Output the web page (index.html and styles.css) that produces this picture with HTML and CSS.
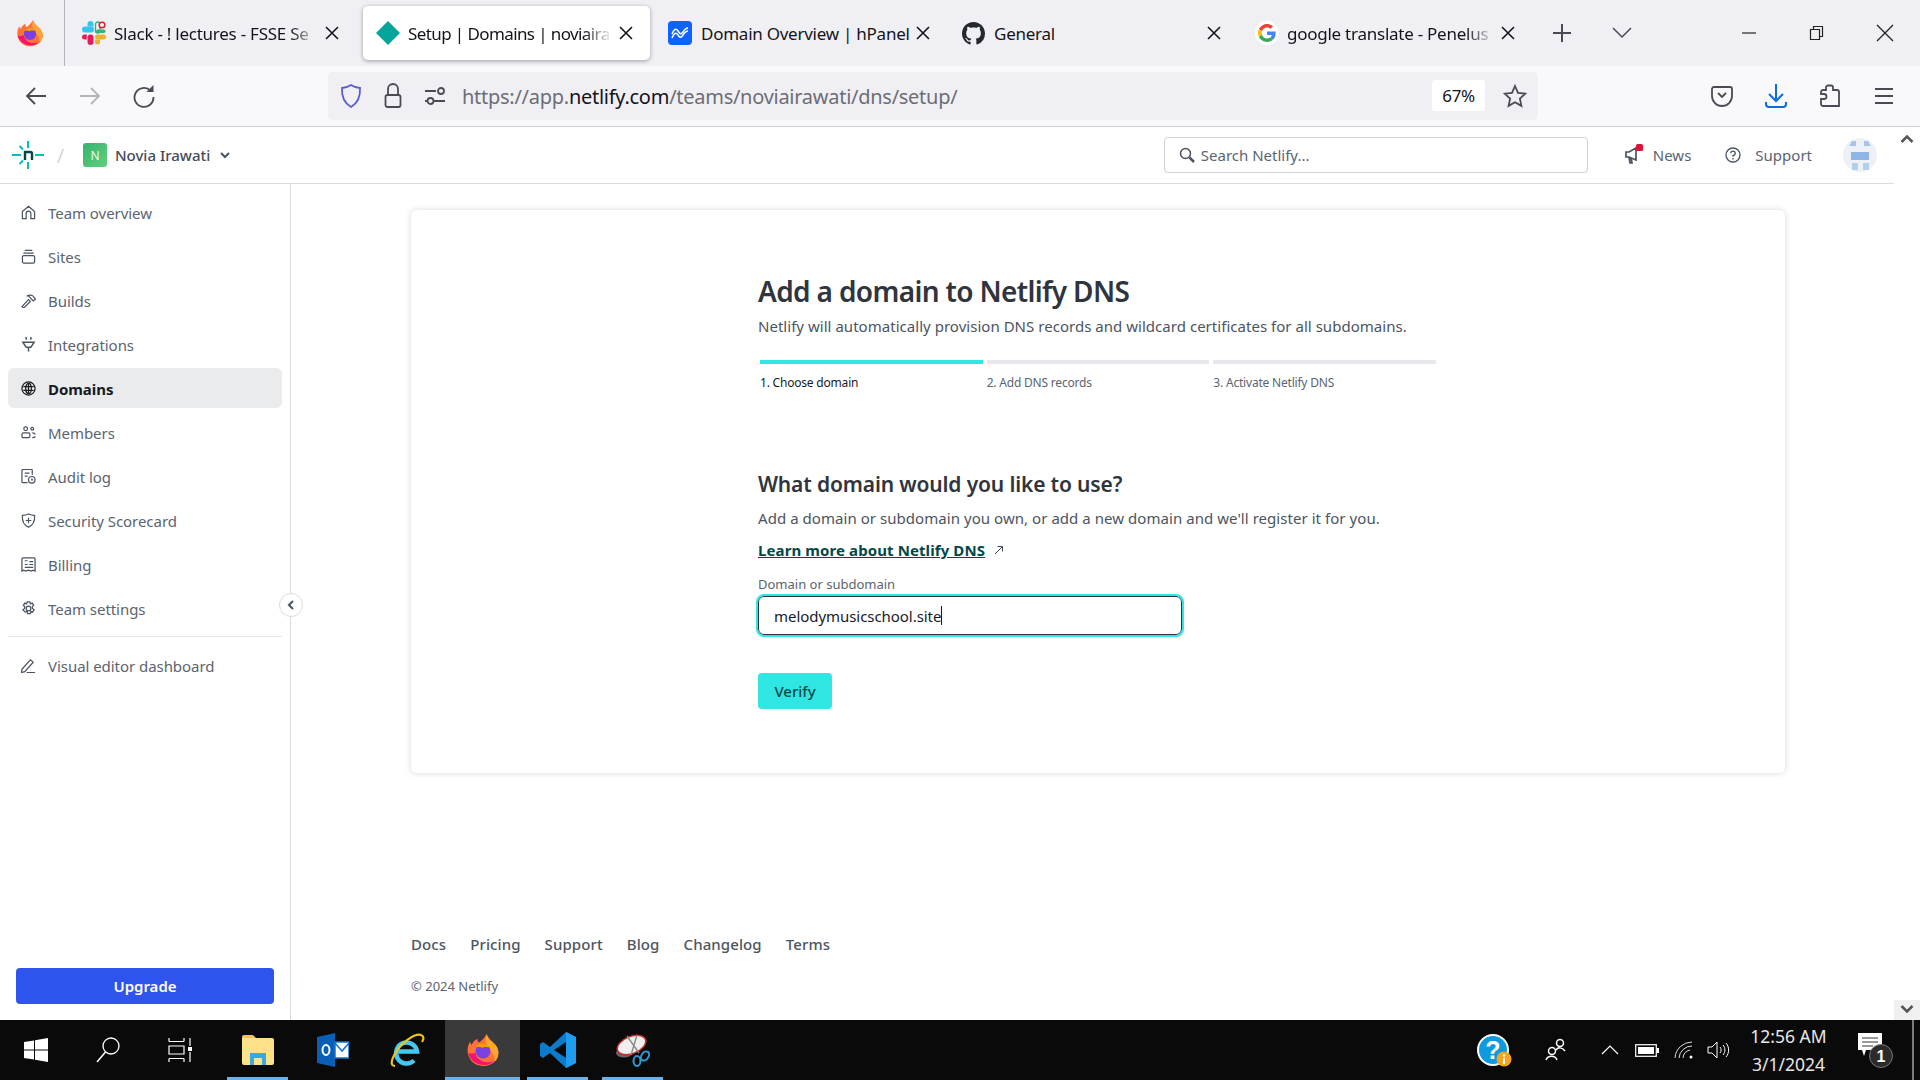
FILE: index.html
```html
<!DOCTYPE html>
<html lang="en">
<head>
    <meta charset="UTF-8">
    <title>Setup | Domains | noviairawati</title>
    <link rel="stylesheet" href="styles.css">
</head>
<body>
    <div class="tabbar">
        <div class="ff-button">
            <svg width="28" height="28" viewBox="0 0 32 32">
                <symbol id="firefox" viewBox="0 0 32 32">
                    <path d="M16 31C7.5 31 1.5 24.5 1.5 16.5c0-3.5 1-6.5 2.5-8.5 0 1.5.5 2.5 1.500 3 1-2.500 3-4.500 5.500-5.500-.5 2 0 3 1.500 3.500C15 7 18 4 19.500 1c1 4 3.500 5.500 6 8 3.500 3 5 6 5 9.500C30.500 25.500 24.500 31 16 31z" fill="#ff7139"/>
                    <path d="M19.5 1c1 4 3.5 5.5 6 8 3.5 3 5 6 5 9.5 0 3-1 5.500-3 8-1-7-4-9.500-7-12.500C18 11 18 6 19.500 1z" fill="#ffa436"/>
                    <path d="M2 19c2 7 8 11 15 11 4 0 7-1.500 9-3.500-5 2-11 1-14-2-2.500-2.500-3-4.500-3-6-3 1-5.500 1-7 .5z" fill="#f5156c"/>
                    <circle cx="16" cy="17" r="7" fill="#7b3fe4"/>
                    <path d="M9 13c2-2.500 5-3.500 8-3 3 .5 5 2 6 4-2-1-4-1-6-.5-1.500.5-2.500.5-3 0-2-.5-3.500-.5-5-.5z" fill="#ff980e"/>
                </symbol>
                <use href="#firefox"/>
            </svg>
        </div>
        <div class="tabs">
            <div class="tab">
                <svg class="tab-icon slack" viewBox="0 0 24 24">
                    <rect x="0" y="5.5" width="12" height="6" rx="3" fill="#36c5f0"/>
                    <path d="M5.500 5.500V3a3 3 0 016 0v2.500z" fill="#36c5f0"/>
                    <rect x="13.500" y="1" width="4.500" height="11" rx="2.200" fill="none" stroke="#2eb67d" stroke-width="1.400"/>
                    <rect x="14" y="8.500" width="9.500" height="3.500" rx="1.700" fill="#2eb67d"/>
                    <circle cx="20" cy="4" r="2.800" fill="#fff" stroke="#e01e2d" stroke-width="1.600"/>
                    <rect x="13" y="13.500" width="11" height="5" rx="2.500" fill="#ecb22e"/>
                    <path d="M13 18.500h5V21a2.500 2.500 0 01-5 0z" fill="#ecb22e"/>
                    <rect x="5.500" y="13.500" width="6" height="10.500" rx="3" fill="#e01e5a"/>
                    <path d="M4.800 13.500v5H2.500a2.500 2.500 0 010-5z" fill="#e01e5a"/>
                </svg>
                <span class="tab-title">Slack - ! lectures - FSSE Se</span>
                <svg class="tab-close" viewBox="0 0 14 14"><path d="M1 1l12 12M13 1L1 13"/></svg>
            </div>
            <div class="tab active">
                <svg class="tab-icon" viewBox="0 0 26 26"><path d="M13 1l12 12-12 12L1 13z" fill="#05a59c"/></svg>
                <span class="tab-title">Setup | Domains | noviaira</span>
                <svg class="tab-close" viewBox="0 0 14 14"><path d="M1 1l12 12M13 1L1 13"/></svg>
            </div>
            <div class="tab">
                <svg class="tab-icon hpanel" viewBox="0 0 24 24">
                    <rect width="24" height="24" rx="4" fill="#0f62fe"/>
                    <path d="M4 13c2-5 4-6 6-3s3 4 5 1 3-4 5-4M4 17c2-5 4-6 6-3s3 3 5 0 3-4 5-4" fill="none" stroke="#fff" stroke-width="1.500"/>
                </svg>
                <span class="tab-title no-fade">Domain Overview | hPanel</span>
                <svg class="tab-close" viewBox="0 0 14 14"><path d="M1 1l12 12M13 1L1 13"/></svg>
            </div>
            <div class="tab">
                <svg class="tab-icon github" viewBox="0 0 16 16">
                    <path fill="#24292f" d="M8 0C3.58 0 0 3.58 0 8c0 3.54 2.29 6.53 5.47 7.59.4.07.55-.17.55-.38 0-.19-.01-.82-.01-1.49-2.01.37-2.53-.49-2.69-.94-.09-.23-.48-.94-.82-1.13-.28-.15-.68-.52-.01-.53.63-.01 1.08.58 1.23.82.72 1.21 1.87.87 2.33.66.07-.52.28-.87.51-1.07-1.78-.2-3.64-.89-3.64-3.95 0-.87.31-1.59.82-2.15-.08-.2-.36-1.02.08-2.12 0 0 .67-.21 2.2.82.64-.18 1.32-.27 2-.27s1.36.09 2 .27c1.53-1.04 2.2-.82 2.2-.82.44 1.1.16 1.92.08 2.12.51.56.82 1.27.82 2.15 0 3.07-1.87 3.75-3.65 3.95.29.25.54.73.54 1.48 0 1.07-.01 1.93-.01 2.2 0 .21.15.46.55.38A8.013 8.013 0 0016 8c0-4.42-3.58-8-8-8z"/>
                </svg>
                <span class="tab-title no-fade">General</span>
                <svg class="tab-close" viewBox="0 0 14 14"><path d="M1 1l12 12M13 1L1 13"/></svg>
            </div>
            <div class="tab">
                <svg class="tab-icon google" viewBox="0 0 24 24">
                    <circle cx="12" cy="12" r="12" fill="#fff"/>
                    <g transform="translate(3 3) scale(0.375)">
                        <path fill="#EA4335" d="M24 9.5c3.54 0 6.71 1.22 9.21 3.6l6.85-6.85C35.9 2.38 30.47 0 24 0 14.62 0 6.51 5.38 2.56 13.22l7.98 6.19C12.43 13.72 17.74 9.5 24 9.5z"/>
                        <path fill="#4285F4" d="M46.98 24.55c0-1.57-.15-3.09-.38-4.55H24v9.02h12.94c-.58 2.96-2.26 5.48-4.78 7.18l7.73 6c4.51-4.18 7.09-10.36 7.09-17.65z"/>
                        <path fill="#FBBC05" d="M10.53 28.59c-.48-1.45-.76-2.99-.76-4.59s.27-3.14.76-4.59l-7.98-6.19C.92 16.46 0 20.12 0 24c0 3.88.92 7.54 2.56 10.78l7.97-6.19z"/>
                        <path fill="#34A853" d="M24 48c6.48 0 11.93-2.13 15.89-5.81l-7.73-6c-2.15 1.45-4.92 2.3-8.16 2.3-6.26 0-11.57-4.22-13.47-9.91l-7.98 6.19C6.51 42.62 14.62 48 24 48z"/>
                    </g>
                </svg>
                <span class="tab-title">google translate - Penelus</span>
                <svg class="tab-close" viewBox="0 0 14 14"><path d="M1 1l12 12M13 1L1 13"/></svg>
            </div>
        </div>
        <div class="tab-action">
            <svg width="20" height="20" viewBox="0 0 20 20"><path d="M10 1v18M1 10h18" stroke="#4a4a55" stroke-width="2" fill="none"/></svg>
        </div>
        <div class="tab-action">
            <svg width="20" height="12" viewBox="0 0 20 12"><path d="M1 1l9 9 9-9" stroke="#4a4a55" stroke-width="1.5" fill="none"/></svg>
        </div>
        <div class="window-controls">
            <div class="window-btn"><svg width="16" height="16" viewBox="0 0 16 16"><path d="M1 8h14" stroke="#222" stroke-width="1.2"/></svg></div>
            <div class="window-btn"><svg width="16" height="16" viewBox="0 0 16 16"><path d="M1.5 4.5h9v10h-9zM4.5 4.5v-3h9v10h-3" stroke="#222" stroke-width="1.2" fill="none"/></svg></div>
            <div class="window-btn"><svg width="18" height="18" viewBox="0 0 18 18"><path d="M1 1l16 16M17 1L1 17" stroke="#222" stroke-width="1.3"/></svg></div>
        </div>
    </div>

    <div class="toolbar">
        <div class="tool-btn"><svg width="24" height="24" viewBox="0 0 24 24"><path d="M22 12H3M11 4l-8 8 8 8" class="tool-line"/></svg></div>
        <div class="tool-btn"><svg width="24" height="24" viewBox="0 0 24 24"><path d="M2 12h19M13 4l8 8-8 8" class="tool-line muted"/></svg></div>
        <div class="tool-btn"><svg width="24" height="24" viewBox="0 0 24 24"><path d="M18.5 6.5A9.5 9.5 0 1021.5 13" class="tool-line"/><path d="M14.5 8h7V1z" fill="#4b4a55"/></svg></div>
        <div class="urlbar">
            <svg class="url-icon" width="22" height="26" viewBox="0 0 22 26"><path d="M11 2c3 2 6 3 9 3 .5 9-2 15-9 19C4 20 1.5 14 2 5c3 0 6-1 9-3z" fill="none" stroke="#5b5bd6" stroke-width="1.8"/></svg>
            <svg class="url-icon" width="18" height="26" viewBox="0 0 18 26"><path d="M4 12V6a5 5 0 0110 0v6" class="tool-line"/><rect x="1.5" y="12" width="15" height="12" rx="2" class="tool-line"/></svg>
            <svg class="url-icon" width="22" height="20" viewBox="0 0 22 20"><path d="M1 5h11M1 15h3M10 15h11" class="tool-line"/><circle cx="17" cy="5" r="3" class="tool-line"/><circle cx="6.5" cy="15" r="3" class="tool-line"/></svg>
            <div class="url-text">https://app.<b>netlify.com</b>/teams/noviairawati/dns/setup/</div>
            <div class="zoom-badge">67%</div>
            <svg class="star" width="24" height="24" viewBox="0 0 24 24"><path d="M12 2l3 6.8 7.3.8-5.400 5 1.500 7.300L12 18.200l-6.400 3.700 1.500-7.300-5.400-5 7.300-.8z" class="tool-line"/></svg>
        </div>
        <div class="tool-btn"><svg width="22" height="22" viewBox="0 0 22 22"><path d="M3 2h16a2 2 0 012 2v7a10 10 0 01-20 0V4a2 2 0 012-2z" class="tool-line"/><path d="M7 8l4 4 4-4" class="tool-line"/></svg></div>
        <div class="tool-btn"><svg width="24" height="26" viewBox="0 0 24 26"><path d="M12 1v17M5 11l7 7 7-7M2 19v2a3 3 0 003 3h14a3 3 0 003-3v-2" fill="none" stroke="#0b6be0" stroke-width="2"/></svg></div>
        <div class="tool-btn"><svg width="22" height="24" viewBox="0 0 22 24"><path d="M9 1.5h3a2 2 0 012 2V6h4a2 2 0 012 2v14H4a2 2 0 01-2-2v-5h3a2.500 2.500 0 000-5H2V8a2 2 0 012-2h3V3.500a2 2 0 012-2z" class="tool-line"/></svg></div>
        <div class="tool-btn"><svg width="20" height="18" viewBox="0 0 20 18"><path d="M1 2h18M1 9h18M1 16h18" class="tool-line"/></svg></div>
    </div>

    <div class="viewport">
        <div class="page">
            <header class="app-header">
                <svg class="logo" width="32" height="28" viewBox="0 0 32 28">
                    <path d="M16 0v7M16 21v7M0 14h9M23 14h9M7.500 5l3.500 3.500M7.500 23l3.500-3.500" stroke="#05bdba" stroke-width="2" fill="none"/>
                    <path d="M13 19v-8h5.500a1.500 1.500 0 011.500 1.500V19" stroke="#014847" stroke-width="2.400" fill="none"/>
                </svg>
                <span class="crumb-slash">/</span>
                <span class="team-avatar">N</span>
                <span class="team-name">Novia Irawati</span>
                <svg class="team-caret" width="10" height="7" viewBox="0 0 10 7"><path d="M1 1l4 4 4-4" fill="none" stroke="#4a5361" stroke-width="2"/></svg>
                <div class="search">
                    <svg width="16" height="16" viewBox="0 0 16 16"><circle cx="6.5" cy="6.5" r="5" fill="none" stroke="#4a5361" stroke-width="1.5"/><path d="M10.5 10.5l4.500 4.500" stroke="#4a5361" stroke-width="2.500"/></svg>
                    <span>Search Netlify...</span>
                </div>
                <div class="header-link news">
                    <svg width="20" height="22" viewBox="0 0 20 22">
                        <path d="M2 8h3l7-4v12l-7-3H2zM5 13l1 6h2l-1-5" fill="none" stroke="#4a5361" stroke-width="1.7"/>
                        <rect x="12" y="0" width="7" height="7" rx="1.5" fill="#e0123c"/>
                    </svg>
                    <span>News</span>
                </div>
                <div class="header-link support">
                    <svg width="16" height="16" viewBox="0 0 16 16"><circle cx="8" cy="8" r="7" fill="none" stroke="#4a5361" stroke-width="1.3"/><path d="M5.8 6.2A2.200 2.200 0 118 8.500v1.300M8 11v1.500" fill="none" stroke="#4a5361" stroke-width="1.300"/></svg>
                    <span>Support</span>
                </div>
                <div class="user-avatar">
                    <svg width="34" height="34" viewBox="0 0 34 34">
                        <path d="M9 3h4v5H6zM21 3h4l3 5h-7z" fill="#a8c6ea"/>
                        <rect x="8" y="14" width="18" height="8" fill="#8db6e6"/>
                        <rect x="9" y="25" width="6" height="7" fill="#b4cfee"/>
                        <rect x="20" y="25" width="6" height="7" fill="#b4cfee"/>
                    </svg>
                </div>
            </header>

            <div class="app-body">
                <aside class="sidebar">
                    <nav class="side-nav">
                        <a class="side-item">
                            <svg viewBox="0 0 16 16"><path d="M1.5 7L8 1.500 14.500 7v7.500h-4V9a2.500 2.500 0 00-5 0v5.500h-4z"/></svg>Team overview
                        </a>
                        <a class="side-item">
                            <svg viewBox="0 0 16 16"><path d="M4 1.5h8M2.500 4.500h11"/><rect x="1.5" y="7" width="13" height="8" rx="1.5"/></svg>Sites
                        </a>
                        <a class="side-item">
                            <svg viewBox="0 0 16 16"><path d="M1 14.500l7-7.500 2 2-7 7zM6 3.500c3-2 6-1.500 7 0l2.500 3-2.500 2-5-5.500"/></svg>Builds
                        </a>
                        <a class="side-item">
                            <svg viewBox="0 0 16 16"><path d="M5.5 0v3M10.500 0v3M2 5.500h12L10.500 11h-5zM8 11v4.500" stroke-width="1.6"/></svg>Integrations
                        </a>
                        <a class="side-item active">
                            <svg viewBox="0 0 16 16"><circle cx="8" cy="8" r="7"/><ellipse cx="8" cy="8" rx="3" ry="5.5"/><path d="M2.5 6h11M2.500 10h11M8 2.500v11"/></svg>Domains
                        </a>
                        <a class="side-item">
                            <svg viewBox="0 0 16 16"><circle cx="5" cy="4" r="2"/><circle cx="12" cy="4" r="1.5"/><rect x="1" y="8.5" width="8.5" height="5" rx="1.5"/><path d="M12 8.500c2 0 3 .5 3 1.500M12 13.500c2 0 3-.5 3-1.500"/></svg>Members
                        </a>
                        <a class="side-item">
                            <svg viewBox="0 0 16 16"><path d="M7 14.500H2a1 1 0 01-1-1v-12a1 1 0 011-1h9a1 1 0 011 1V6M4 4.500h5M4 7.500h3"/><circle cx="11.5" cy="11.5" r="3.5"/><path d="M11.5 10v1.500h1.500"/></svg>Audit log
                        </a>
                        <a class="side-item">
                            <svg viewBox="0 0 16 16"><path d="M8 1c2 1 4 1.500 6.500 1.500.5 6-1.500 10.500-6.500 12.500C3 13 1 8.500 1.500 2.500 4 2.500 6 2 8 1zM8 5v6M5 8h6"/></svg>Security Scorecard
                        </a>
                        <a class="side-item">
                            <svg viewBox="0 0 16 16"><path d="M2 1h12a1 1 0 011 1v13l-2-1-2 1-3-1-3 1-2-1-2 1V2a1 1 0 011-1zM9 5h4M9 8h4M4 11h9M4 4h3M4 8h3"/></svg>Billing
                        </a>
                        <a class="side-item">
                            <svg viewBox="0 0 16 16"><circle cx="8" cy="8" r="2.5"/><path d="M6.500 1h3l.5 2 2-.8 1.500 2.500L12 6l.2 2 1.800 1.300-1.500 2.600-2-.8-.5 2.400h-3l-.5-2.400-2 .8L2 9.300 3.800 8 4 6 2.500 4.700 4 2.200l2 .8z"/></svg>Team settings
                        </a>
                    </nav>
                    <div class="side-divider"></div>
                    <a class="side-item">
                        <svg viewBox="0 0 16 16"><path d="M1 12l9-10 3 2.500-9 10-3.500 1zM6 15.500h9"/></svg>Visual editor dashboard
                    </a>
                    <button class="upgrade">Upgrade</button>
                    <div class="collapse">
                        <svg width="8" height="10" viewBox="0 0 8 10"><path d="M6 1L2 5l4 4" fill="none" stroke="#4a5361" stroke-width="2"/></svg>
                    </div>
                </aside>

                <main class="main">
                    <section class="card">
                        <h1>Add a domain to Netlify DNS</h1>
                        <p class="lead">Netlify will automatically provision DNS records and wildcard certificates for all subdomains.</p>
                        <ol class="steps">
                            <li class="step current">1. Choose domain</li>
                            <li class="step">2. Add DNS records</li>
                            <li class="step">3. Activate Netlify DNS</li>
                        </ol>
                        <h2>What domain would you like to use?</h2>
                        <p class="help">Add a domain or subdomain you own, or add a new domain and we'll register it for you.</p>
                        <p class="learn">
                            <a class="learn-link">Learn more about Netlify DNS</a>
                            <svg width="10" height="10" viewBox="0 0 10 10"><path d="M1 9l7-7M3.5 1.5H8.5V6.5" fill="none" stroke="#3c4654" stroke-width="1"/></svg>
                        </p>
                        <label class="field-label">Domain or subdomain</label>
                        <div class="field"><span>melodymusicschool.site</span><i class="caret"></i></div>
                        <button class="verify">Verify</button>
                    </section>
                    <footer class="page-footer">
                        <nav class="footer-links">
                            <a>Docs</a><a>Pricing</a><a>Support</a><a>Blog</a><a>Changelog</a><a>Terms</a>
                        </nav>
                        <div class="copyright">© 2024 Netlify</div>
                    </footer>
                </main>
            </div>
        </div>
        <div class="scrollbar">
            <div class="scroll-btn"><svg width="14" height="10" viewBox="0 0 14 10"><path d="M1.5 8L7 2.500 12.500 8" fill="none" stroke="#555" stroke-width="2.5"/></svg></div>
            <div class="scroll-btn lower"><svg width="14" height="10" viewBox="0 0 14 10"><path d="M1.5 2L7 7.500 12.500 2" fill="none" stroke="#555" stroke-width="2.5"/></svg></div>
        </div>
    </div>

    <div class="taskbar">
        <div class="task-tool">
            <svg width="24" height="24" viewBox="0 0 24 24"><path d="M0 4l10-1.500V11.500H0zM11 2.300L24 0v11.500H11zM0 12.500h10V21.500L0 20zM11 12.500h13V24l-13-2.300z" fill="#fff"/></svg>
        </div>
        <div class="task-tool">
            <svg width="24" height="26" viewBox="0 0 24 26"><circle cx="15" cy="9" r="8" fill="none" stroke="#fff" stroke-width="1.3"/><path d="M9.5 15L1 25" stroke="#fff" stroke-width="1.5"/></svg>
        </div>
        <div class="task-tool">
            <svg width="24" height="24" viewBox="0 0 24 24"><path d="M1 3.5h15M1 0v3.500M16 0v3.500M1 8h15v8H1zM1 20.500h15M1 24v-3.500M16 24v-3.500M22 0v8M22 14v10" fill="none" stroke="#fff" stroke-width="1.2"/><rect x="20" y="9" width="4" height="4" fill="#fff"/></svg>
        </div>
        <div class="task-app open">
            <svg width="32" height="30" viewBox="0 0 32 30">
                <path d="M0 2a2 2 0 012-2h9l3 3H0z" fill="#f3c64b"/>
                <path d="M0 3h30a2 2 0 012 2v23a2 2 0 01-2 2H2a2 2 0 01-2-2z" fill="#fde28a"/>
                <path d="M8 18h16v12H8z" fill="#3ba9e0"/>
                <path d="M12 23h8v7h-8z" fill="#fde28a"/>
            </svg>
        </div>
        <div class="task-app">
            <svg width="32" height="34" viewBox="0 0 32 34">
                <path d="M0 4l18-4v34L0 30z" fill="#0a5eb5"/>
                <rect x="18" y="9" width="14" height="16" fill="#fff"/>
                <path d="M18 9h14v16H18zM18 10l7 8 7-8" fill="none" stroke="#0f78d4" stroke-width="1.5"/>
                <ellipse cx="9" cy="17" rx="3.5" ry="5" fill="none" stroke="#fff" stroke-width="2"/>
            </svg>
        </div>
        <div class="task-app">
            <svg width="35" height="35" viewBox="0 0 35 35">
                <path d="M6 18.500h21a10.500 10.500 0 10-3 9" fill="none" stroke="#45c8f0" stroke-width="4.500"/>
                <path d="M5 33C0 33 1 27 6 19 11 10 25 0 31 2c3 1 3 4 1 7" fill="none" stroke="#f2c21a" stroke-width="2.200"/>
            </svg>
        </div>
        <div class="task-app open current">
            <svg width="34" height="36" viewBox="0 0 32 32"><use href="#firefox"/></svg>
        </div>
        <div class="task-app open">
            <svg width="36" height="36" viewBox="0 0 36 36">
                <path d="M26 0l10 5v26l-10 5L10 21l-7 5-3-2v-12l3-2 7 5z" fill="#0b7ccb"/>
                <path d="M26 10L14 18l12 8z" fill="#0a0a0a"/>
                <path d="M26 0l10 5v26l-10 5z" fill="#1f9cf0"/>
            </svg>
        </div>
        <div class="task-app open">
            <svg width="34" height="34" viewBox="0 0 34 34">
                <ellipse cx="8" cy="20" rx="8" ry="4.500" fill="#666"/>
                <ellipse cx="15.500" cy="12" rx="15" ry="8.500" transform="rotate(-22 15.500 12)" fill="#efefef" stroke="#c82c2c" stroke-width="1.500"/>
                <path d="M11 3l12 17M21 2l-6 20" stroke="#8a8a8a" stroke-width="1.400"/>
                <ellipse cx="21" cy="28" rx="3.500" ry="5" fill="none" stroke="#2e9bd6" stroke-width="2"/>
                <ellipse cx="29" cy="23" rx="3.500" ry="5" transform="rotate(35 29 23)" fill="none" stroke="#2e9bd6" stroke-width="2"/>
            </svg>
        </div>

        <div class="tray">
            <svg class="tray-help" width="35" height="33" viewBox="0 0 35 33">
                <circle cx="16" cy="16" r="15" fill="#0d9adf" stroke="#fff" stroke-width="2"/>
                <text x="16" y="25" text-anchor="middle" class="help-mark">?</text>
                <circle cx="27" cy="25" r="7.500" fill="#f4a522"/>
                <rect x="26" y="24" width="2" height="6" fill="#fff"/><rect x="26" y="20.5" width="2" height="2" fill="#fff"/>
            </svg>
            <svg class="tray-people" width="22" height="24" viewBox="0 0 22 24" fill="none" stroke="#fff" stroke-width="1.5">
                <circle cx="15" cy="5" r="3.5"/><path d="M11 12c2-3 6-3 9 1"/>
                <circle cx="7" cy="13" r="3.5"/><path d="M1 22c2-5 9-5 11 0"/>
            </svg>
            <svg class="tray-chevron" width="18" height="10" viewBox="0 0 18 10"><path d="M1 9l8-8 8 8" fill="none" stroke="#fff" stroke-width="1.2"/></svg>
            <svg class="tray-battery" width="24" height="13" viewBox="0 0 24 13"><rect x=".7" y=".7" width="20.6" height="11.6" fill="none" stroke="#fff" stroke-width="1.2"/><rect x="3" y="3" width="16" height="7" fill="#fff"/><rect x="22" y="4" width="2" height="5" fill="#fff"/></svg>
            <svg class="tray-wifi" width="20" height="18" viewBox="0 0 20 18" fill="none" stroke="#ddd" stroke-width="1"><path d="M1 17A17 17 0 0118 1M5 17A13 13 0 0118 5M9 17a9 9 0 017-8"/><circle cx="17" cy="16" r="1.5" fill="#fff" stroke="none"/></svg>
            <svg class="tray-sound" width="23" height="18" viewBox="0 0 23 18" fill="none" stroke="#fff" stroke-width="1"><path d="M1 6h4l5-5v16l-5-5H1zM13 6c1.500 2 1.500 4 0 6M16 4c2.500 3 2.500 7 0 10M19 2c3.500 4 3.500 10 0 14"/></svg>
            <div class="clock"><span>12:56 AM</span><span>3/1/2024</span></div>
            <svg class="tray-note" width="36" height="36" viewBox="0 0 36 36">
                <path d="M0 1h24v17H8l-2 6-2-6H0z" fill="#fff"/>
                <path d="M4 6h16M4 10h16M4 14h11" stroke="#333" stroke-width="1"/>
                <circle cx="23" cy="24" r="11.5" fill="#2b2b2b" stroke="#777" stroke-width="1"/>
                <text x="23" y="30" text-anchor="middle" class="note-count">1</text>
            </svg>
            <div class="tray-edge"></div>
        </div>
    </div>
</body>
</html>
```

FILE: styles.css
```css
* {
    box-sizing: border-box;
}
body {
    margin: 0;
    width: 1920px;
    height: 1080px;
    overflow: hidden;
    display: flex;
    flex-direction: column;
    font-family: "Noto Sans", Arial, sans-serif;
    color: #2d3440;
    background: #fff;
}

/* browser tabs */
.tabbar {
    height: 66px;
    display: flex;
    align-items: center;
    background: #f0f0f4;
}
.ff-button {
    width: 65px;
    height: 66px;
    padding-left: 16px;
    display: flex;
    align-items: center;
    border-right: 1px solid #b5b5bb;
}
.tabs {
    display: flex;
    gap: 7px;
    margin-left: 4px;
}
.tab {
    width: 287px;
    height: 54px;
    padding: 0 17px 0 13px;
    display: flex;
    align-items: center;
    gap: 6px;
    border-radius: 5px;
    font-size: 17px;
    letter-spacing: -0.25px;
    color: #15141a;
}
.tab.active {
    background: #fff;
    box-shadow: 0 1px 4px rgba(0, 0, 0, 0.35);
    padding-left: 12px;
    gap: 7px;
    letter-spacing: -0.6px;
}
.tab-icon {
    width: 26px;
    height: 26px;
    flex: none;
}
.tab-icon.slack {
    width: 24px;
    height: 24px;
    margin-right: 2px;
}
.tab-icon.hpanel {
    width: 24px;
    height: 24px;
    margin: 0 3px 0 -2px;
}
.tab-icon.github {
    width: 23px;
    height: 23px;
    margin: 0 3px 0 -2px;
}
.tab-icon.google {
    width: 24px;
    height: 24px;
    margin: 0 2px 0 -3px;
}
.tab-title {
    flex: 1;
    overflow: hidden;
    white-space: nowrap;
    -webkit-mask-image: linear-gradient(to right, #000 86%, transparent 100%);
    mask-image: linear-gradient(to right, #000 86%, transparent 100%);
}
.tab-title.no-fade {
    overflow: visible;
    -webkit-mask-image: none;
    mask-image: none;
}
.tab-close {
    width: 14px;
    height: 14px;
    flex: none;
    fill: none;
    stroke: #15141a;
    stroke-width: 1.6;
}
.tab-action {
    width: 60px;
    height: 66px;
    display: flex;
    align-items: center;
    justify-content: center;
}
.window-controls {
    margin-left: auto;
    display: flex;
    padding-right: 1px;
}
.window-btn {
    width: 68px;
    height: 66px;
    display: flex;
    align-items: center;
    justify-content: center;
}

/* browser toolbar */
.toolbar {
    height: 61px;
    padding: 6px 9px 7px;
    display: flex;
    align-items: center;
    background: #f9f9fb;
    border-bottom: 1px solid #cfcfd8;
}
.tool-btn {
    width: 54px;
    height: 48px;
    display: flex;
    align-items: center;
    justify-content: center;
}
.tool-line {
    fill: none;
    stroke: #4b4a55;
    stroke-width: 1.8;
}
.tool-line.muted {
    stroke: #b4b4ba;
}
.urlbar {
    flex: 1;
    height: 48px;
    margin: 0 157px;
    padding: 0 11px 0 12px;
    display: flex;
    align-items: center;
    background: #f0f0f4;
    border-radius: 5px;
}
.url-icon {
    margin-right: 22px;
    flex: none;
}
.url-text {
    flex: 1;
    margin: 2px 0 0 -6px;
    font-size: 20px;
    letter-spacing: -0.27px;
    color: #6d6d76;
    white-space: nowrap;
}
.url-text b {
    font-weight: 400;
    color: #15141a;
}
.zoom-badge {
    width: 53px;
    height: 31px;
    display: flex;
    align-items: center;
    justify-content: center;
    background: #fff;
    border-radius: 3px;
    font-size: 17px;
    letter-spacing: -0.4px;
    color: #15141a;
}
.star {
    margin-left: 18px;
}

/* page */
.viewport {
    flex: 1;
    min-height: 0;
    display: flex;
}
.page {
    width: 1894px;
    display: flex;
    flex-direction: column;
}
.app-header {
    height: 57px;
    padding: 0 17px 0 12px;
    display: flex;
    align-items: center;
    border-bottom: 1px solid #d8dbe0;
}
.crumb-slash {
    margin: 0 19px 0 13px;
    font-size: 20px;
    font-weight: 300;
    color: #c3c8cf;
}
.team-avatar {
    width: 24px;
    height: 24px;
    display: flex;
    align-items: center;
    justify-content: center;
    background: linear-gradient(135deg, #32b36c, #63d07f);
    border-radius: 3px;
    font-size: 12px;
    color: #e8fff0;
}
.team-name {
    margin-left: 8px;
    font-size: 15px;
    font-weight: 500;
    color: #444c59;
}
.team-caret {
    margin-left: 10px;
}
.search {
    width: 424px;
    height: 36px;
    margin-left: auto;
    padding-left: 14px;
    display: flex;
    align-items: center;
    gap: 6px;
    border: 1px solid #d0d4da;
    border-radius: 4px;
    font-size: 15px;
    color: #5b6470;
}
.header-link {
    display: flex;
    align-items: center;
    font-size: 15px;
    color: #5b6470;
}
.news {
    gap: 9px;
    margin-left: 36px;
}
.support {
    gap: 14px;
    margin-left: 34px;
}
.user-avatar {
    width: 34px;
    height: 34px;
    margin-left: 31px;
    background: #edf0f4;
    border-radius: 50%;
}
.app-body {
    flex: 1;
    min-height: 0;
    display: flex;
}

/* sidebar */
.sidebar {
    width: 291px;
    padding: 8px 8px 16px;
    position: relative;
    display: flex;
    flex-direction: column;
    border-right: 1px solid #d8dbe0;
}
.side-nav {
    display: flex;
    flex-direction: column;
    gap: 4px;
}
.side-item {
    height: 40px;
    padding: 1px 0 0 13px;
    display: flex;
    align-items: center;
    gap: 12px;
    border-radius: 6px;
    font-size: 15px;
    letter-spacing: -0.05px;
    color: #5b6470;
}
.side-item svg {
    width: 15px;
    height: 15px;
    flex: none;
    fill: none;
    stroke: #4a5361;
    stroke-width: 1.3;
}
.side-item.active {
    background: #e9ebed;
    font-weight: 700;
    color: #181a1f;
}
.side-item.active svg {
    stroke: #181a1f;
}
.side-divider {
    height: 1px;
    margin: 8px 0;
    background: #e4e6ea;
}
.upgrade {
    height: 36px;
    margin: auto 8px 0;
    border: 0;
    border-radius: 4px;
    background: #2f54eb;
    font-family: inherit;
    font-size: 15px;
    font-weight: 600;
    color: #fff;
}
.collapse {
    width: 24px;
    height: 24px;
    position: absolute;
    top: 409px;
    right: -13px;
    display: flex;
    align-items: center;
    justify-content: center;
    background: #fff;
    border: 1px solid #d8dbe0;
    border-radius: 50%;
}

/* main column */
.main {
    flex: 1;
    padding: 26px 109px 0 120px;
}
.card {
    height: 563px;
    padding: 63px 0 0 347px;
    border-radius: 6px;
    box-shadow: 0 0 6px rgba(30, 40, 60, 0.18);
}
h1 {
    margin: 0;
    font-size: 28px;
    line-height: 36px;
    font-weight: 600;
    letter-spacing: -0.65px;
    color: #30353d;
}
.lead {
    margin: 6px 0 0;
    font-size: 15px;
    line-height: 22px;
    letter-spacing: 0.03px;
    color: #4c5460;
}
.steps {
    width: 676px;
    margin: 23px 0 0 2px;
    padding: 0;
    display: grid;
    grid-template-columns: repeat(3, 1fr);
    gap: 4px;
    list-style: none;
}
.step {
    padding-top: 10px;
    border-top: 4px solid #e6e8eb;
    font-size: 12px;
    line-height: 18px;
    letter-spacing: -0.2px;
    color: #5b6470;
}
.step.current {
    border-top-color: #30e6e2;
    color: #181a1f;
}
h2 {
    margin: 77px 0 0;
    font-size: 21px;
    line-height: 30px;
    font-weight: 600;
    letter-spacing: -0.15px;
    color: #30353d;
}
.help {
    margin: 8px 0 0;
    font-size: 15px;
    line-height: 22px;
    letter-spacing: 0.05px;
    color: #4c5460;
}
.learn {
    margin: 10px 0 0;
    display: flex;
    align-items: center;
    gap: 9px;
    line-height: 22px;
}
.learn-link {
    font-size: 15px;
    font-weight: 700;
    letter-spacing: 0.1px;
    color: #014847;
    text-decoration: underline;
}
.field-label {
    display: block;
    margin-top: 14px;
    font-size: 13px;
    line-height: 18px;
    color: #5b6470;
}
.field {
    width: 424px;
    height: 39px;
    margin-top: 3px;
    padding-left: 15px;
    display: flex;
    align-items: center;
    border: 1px solid #2d3440;
    outline: 2px solid #30e6e2;
    outline-offset: 0;
    border-radius: 6px;
    font-size: 15px;
    letter-spacing: -0.05px;
    color: #181a1f;
}
.caret {
    width: 1px;
    height: 19px;
    background: #181a1f;
}
.verify {
    display: block;
    width: 74px;
    height: 36px;
    margin-top: 38px;
    border: 0;
    border-radius: 4px;
    background: #30e6e2;
    font-family: inherit;
    font-size: 15px;
    font-weight: 500;
    color: #014847;
}
.page-footer {
    margin-top: 161px;
}
.footer-links {
    display: flex;
    gap: 24px;
    font-size: 15px;
    line-height: 20px;
    font-weight: 500;
    letter-spacing: 0.1px;
    color: #4c5460;
}
.copyright {
    margin-top: 22px;
    font-size: 13px;
    line-height: 20px;
    color: #5b6470;
}

/* scrollbar */
.scrollbar {
    width: 26px;
    display: flex;
    flex-direction: column;
    justify-content: space-between;
}
.scroll-btn {
    height: 24px;
    display: flex;
    align-items: center;
    justify-content: center;
}
.scroll-btn.lower {
    height: 20px;
    padding-bottom: 2px;
    background: #f0f0f0;
}

/* windows taskbar */
.taskbar {
    height: 60px;
    display: flex;
    background: #0a0a0a;
}
.task-tool {
    width: 72px;
    display: flex;
    align-items: center;
    justify-content: center;
}
.task-app {
    width: 75px;
    display: flex;
    align-items: center;
    justify-content: center;
    position: relative;
}
.task-app:nth-child(4) {
    margin-left: 4px;
}
.task-app.current {
    background: #3a3a3a;
}
.task-app.open::after {
    content: "";
    height: 3px;
    position: absolute;
    left: 7px;
    right: 7px;
    bottom: 0;
    background: #6cb2e8;
}
.task-app.current::after {
    left: 0;
    right: 0;
}
.tray {
    margin-left: auto;
    display: flex;
    align-items: center;
}
.help-mark {
    font-family: "Liberation Sans", Arial, sans-serif;
    font-size: 25px;
    font-weight: 700;
    fill: #fff;
}
.note-count {
    font-family: "Liberation Sans", Arial, sans-serif;
    font-size: 16px;
    font-weight: 700;
    fill: #fff;
}
.tray-people {
    margin-left: 33px;
}
.tray-chevron {
    margin-left: 34px;
}
.tray-battery {
    margin-left: 16px;
}
.tray-wifi {
    margin-left: 15px;
}
.tray-sound {
    margin-left: 13px;
}
.clock {
    width: 113px;
    margin-left: 2px;
    display: flex;
    flex-direction: column;
    align-items: center;
    gap: 6px;
    font-size: 17.5px;
    line-height: 22px;
    color: #e8e8e8;
}
.tray-note {
    margin-left: 13px;
}
.tray-edge {
    width: 2px;
    height: 60px;
    margin: 0 6px 0 18px;
    background: #7a7a7a;
}
```
